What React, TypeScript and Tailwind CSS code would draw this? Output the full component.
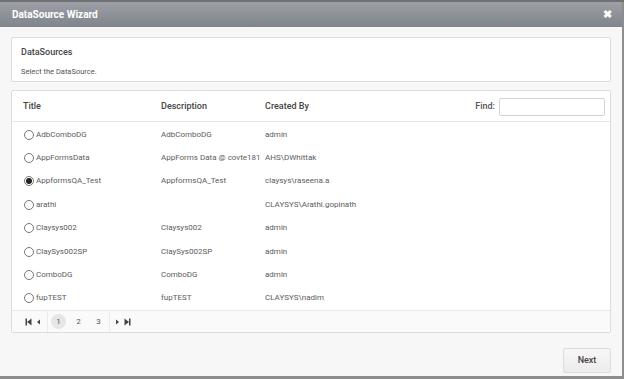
import React from 'react';

const rows = [
  { title: 'AdbComboDG', desc: 'AdbComboDG', by: 'admin' },
  { title: 'AppFormsData', desc: 'AppForms Data @ covte181', by: 'AHS\\DWhittak' },
  { title: 'AppformsQA_Test', desc: 'AppformsQA_Test', by: 'claysys\\raseena.a', checked: true },
  { title: 'arathi', desc: '', by: 'CLAYSYS\\Arathi.gopinath' },
  { title: 'Claysys002', desc: 'Claysys002', by: 'admin' },
  { title: 'ClaySys002SP', desc: 'ClaySys002SP', by: 'admin' },
  { title: 'ComboDG', desc: 'ComboDG', by: 'admin' },
  { title: 'fupTEST', desc: 'fupTEST', by: 'CLAYSYS\\nadim' },
];

function Radio({ checked }: { checked?: boolean }) {
  return (
    <span className="w-[10px] h-[10px] rounded-full border border-[#777] bg-white flex items-center justify-center shrink-0">
      {checked && <span className="w-[6px] h-[6px] rounded-full bg-[#222]" />}
    </span>
  );
}

export default function App() {
  return (
    <div className="w-[624px] h-[379px] bg-[#8d8d8d] overflow-hidden" style={{ fontFamily: 'Roboto, "Liberation Sans", sans-serif' }}>
      <div className="h-[2px] bg-[#6f7073]" />
      <div className="w-[622px] h-[374px] flex flex-col bg-[#f7f7f7]">
        {/* Header */}
        <div className="h-[25px] shrink-0 flex items-center justify-between px-[12px] bg-gradient-to-b from-[#9da0a6] to-[#80848b]">
          <span className="text-white text-[10px] font-bold">DataSource Wizard</span>
          <span className="text-white text-[11px] font-bold leading-none mr-[-2px]">✖</span>
        </div>

        <div className="flex-1 flex flex-col px-[11px] pt-[10px]">
          {/* Info panel */}
          <div className="h-[45px] bg-white border border-[#dcdcdc] rounded-[2px] px-[9px] pt-[8px]">
            <div className="text-[9px] text-[#444] font-medium">DataSources</div>
            <div className="text-[7.5px] text-[#555] mt-[6px]">Select the DataSource.</div>
          </div>

          {/* Grid panel */}
          <div className="mt-[8px] bg-white border border-[#dcdcdc] rounded-[2px] flex flex-col">
            <div className="h-[31px] flex items-center border-b border-[#e6e6e6] text-[9px] text-[#444] font-medium pt-[2px]">
              <span className="w-[149px] pl-[11px]">Title</span>
              <span className="w-[104px]">Description</span>
              <span className="flex-1">Created By</span>
              <span className="text-[#555] mr-[4px]">Find:</span>
              <input className="w-[106px] h-[18px] border border-[#d4d4d4] rounded-[2px] mr-[5px] outline-none" />
            </div>
            <div className="pt-[1px]">
              {rows.map((r) => (
                <div key={r.title} className="h-[23.4px] flex items-center text-[8px] text-[#5c5c5c]">
                  <span className="w-[149px] pl-[12px] flex items-center gap-[2px]">
                    <Radio checked={r.checked} />
                    <span>{r.title}</span>
                  </span>
                  <span className="w-[104px] whitespace-nowrap">{r.desc}</span>
                  <span className="flex-1">{r.by}</span>
                </div>
              ))}
            </div>
            <div className="h-[22px] bg-[#fafafa] border-t border-[#e8e8e8] flex items-center text-[8px] text-[#555]">
              <div className="flex items-center gap-[4px] pl-[13px] pr-[6px] h-full border-r border-[#ececec]">
                <svg width="7" height="8" viewBox="0 0 7 8"><rect x="0.5" y="0.5" width="1.5" height="7" fill="#444" /><path d="M6.5 0.5 L2 4 L6.5 7.5 Z" fill="#444" /></svg>
                <svg width="5" height="8" viewBox="0 0 5 8"><path d="M4 1.5 L1 4 L4 6.5 Z" fill="#444" /></svg>
              </div>
              <div className="flex items-center gap-[5px] px-[3px] h-full border-r border-[#ececec]">
                <span className="w-[15px] h-[15px] rounded-full bg-[#e6e6e6] flex items-center justify-center">1</span>
                <span className="w-[15px] h-[15px] flex items-center justify-center">2</span>
                <span className="w-[15px] h-[15px] flex items-center justify-center">3</span>
              </div>
              <div className="flex items-center gap-[4px] pl-[5px]">
                <svg width="5" height="8" viewBox="0 0 5 8"><path d="M1 1.5 L4 4 L1 6.5 Z" fill="#444" /></svg>
                <svg width="7" height="8" viewBox="0 0 7 8"><path d="M0.5 0.5 L5 4 L0.5 7.5 Z" fill="#444" /><rect x="5" y="0.5" width="1.5" height="7" fill="#444" /></svg>
              </div>
            </div>
          </div>

          {/* Footer */}
          <div className="flex justify-end mt-[15px]">
            <button className="w-[48px] h-[25px] bg-gradient-to-b from-[#f7f7f7] to-[#ececec] border border-[#dcdcdc] rounded-[2px] text-[9px] font-medium text-[#444]">
              Next
            </button>
          </div>
        </div>
      </div>
    </div>
  );
}
